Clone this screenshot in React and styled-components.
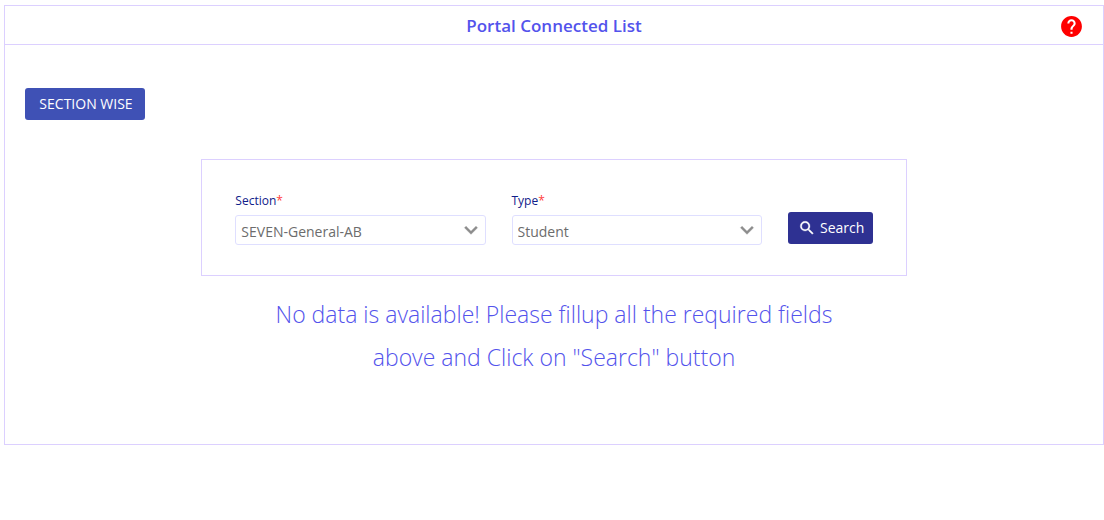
import { useState } from 'react';
import styled, { createGlobalStyle } from 'styled-components';
import { MdExpandMore, MdHelp, MdSearch } from 'react-icons/md';

const GlobalStyle = createGlobalStyle`
  * {
    box-sizing: border-box;
  }
  body {
    margin: 0;
    background: #fff;
    font-family: 'Segoe UI', 'Open Sans', 'Noto Sans', sans-serif;
    font-size: 14px;
  }
  button,
  select {
    font-family: inherit;
    font-size: 14px;
  }
`;

const Frame = styled.main`
  margin: 5px 0 0 4px;
  border: 1px solid #dcd0ff;
`;

const Header = styled.header`
  display: grid;
  grid-template-columns: 1fr auto 1fr;
  align-items: center;
  height: 39px;
  padding: 2px 19px 0;
  border-bottom: 1px solid #dcd0ff;
`;

const Title = styled.h1`
  grid-column: 2;
  margin: 0;
  font-size: 17px;
  font-weight: 600;
  line-height: 24px;
  color: #5353ec;
`;

const HelpButton = styled.button`
  display: flex;
  justify-self: end;
  padding: 0;
  border: none;
  background: none;
  color: #ff0000;
  cursor: pointer;
`;

const Content = styled.div`
  display: flex;
  flex-direction: column;
  align-items: center;
  padding: 43px 20px 65px;
`;

const Button = styled.button`
  display: flex;
  align-items: center;
  justify-content: center;
  gap: 4px;
  width: ${(props) => props.$width};
  height: 32px;
  padding: 0 0 1px 2px;
  border: none;
  border-radius: 3px;
  background: ${(props) => props.$background};
  color: #fff;
  line-height: 20px;
  white-space: nowrap;
  cursor: pointer;

  path:last-child {
    stroke: currentColor;
    stroke-width: 0.4;
  }
`;

const Tabs = styled.nav`
  align-self: flex-start;
  margin-bottom: 39px;
`;

const SearchForm = styled.form`
  display: flex;
  align-items: flex-end;
  gap: 26px;
  width: calc(100% * 2 / 3);
  padding: 31px 33px 30px;
  border: 1px solid #dcd0ff;
`;

const Actions = styled.div`
  padding-bottom: 1px;
`;

const Field = styled.div`
  display: flex;
  flex: 1;
  flex-direction: column;
  gap: 4px;
  min-width: 0;
`;

const Label = styled.label`
  font-size: 12px;
  line-height: 20px;
  color: #10208a;
`;

const Required = styled.span`
  color: #ff3c3c;
`;

const SelectBox = styled.div`
  display: grid;
  align-items: center;

  > * {
    grid-area: 1 / 1;
  }

  > svg {
    justify-self: end;
    margin-right: 2px;
    color: #8c8c8c;
    pointer-events: none;
  }

  > svg path:last-child {
    stroke: currentColor;
    stroke-width: 0.4;
  }
`;

const Select = styled.select`
  width: 100%;
  height: 30px;
  padding: 3px 30px 0 5px;
  appearance: none;
  border: 1px solid #dfdfff;
  border-radius: 3px;
  background: #fff;
  color: #6c6c6c;
`;

const Message = styled.p`
  width: calc(100% * 2 / 3);
  margin: 17px 0 0;
  padding: 0 66px;
  font-size: 23px;
  font-weight: 300;
  line-height: 43px;
  text-align: center;
  color: #5353ec;
`;

const fields = [
  { id: 'section', label: 'Section', options: ['SEVEN-General-AB'] },
  { id: 'type', label: 'Type', options: ['Student'] },
];

function SelectField({ id, label, options }) {
  const [value, setValue] = useState(options[0]);

  return (
    <Field>
      <Label htmlFor={id}>
        {label}
        <Required>*</Required>
      </Label>
      <SelectBox>
        <Select id={id} value={value} onChange={(e) => setValue(e.target.value)}>
          {options.map((option) => (
            <option key={option}>{option}</option>
          ))}
        </Select>
        <MdExpandMore size={26} />
      </SelectBox>
    </Field>
  );
}

export default function App() {
  return (
    <>
      <GlobalStyle />
      <Frame>
        <Header>
          <Title>Portal Connected List</Title>
          <HelpButton type="button" aria-label="Help">
            <MdHelp size={25} />
          </HelpButton>
        </Header>
        <Content>
          <Tabs>
            <Button type="button" $width="120px" $background="#3f51b5">
              SECTION WISE
            </Button>
          </Tabs>
          <SearchForm onSubmit={(e) => e.preventDefault()}>
            {fields.map((field) => (
              <SelectField key={field.id} {...field} />
            ))}
            <Actions>
              <Button type="submit" $width="85px" $background="#2e3192">
                <MdSearch size={18} />
                Search
              </Button>
            </Actions>
          </SearchForm>
          <Message>
            No data is available! Please fillup all the required fields above and
            Click on "Search" button
          </Message>
        </Content>
      </Frame>
    </>
  );
}
